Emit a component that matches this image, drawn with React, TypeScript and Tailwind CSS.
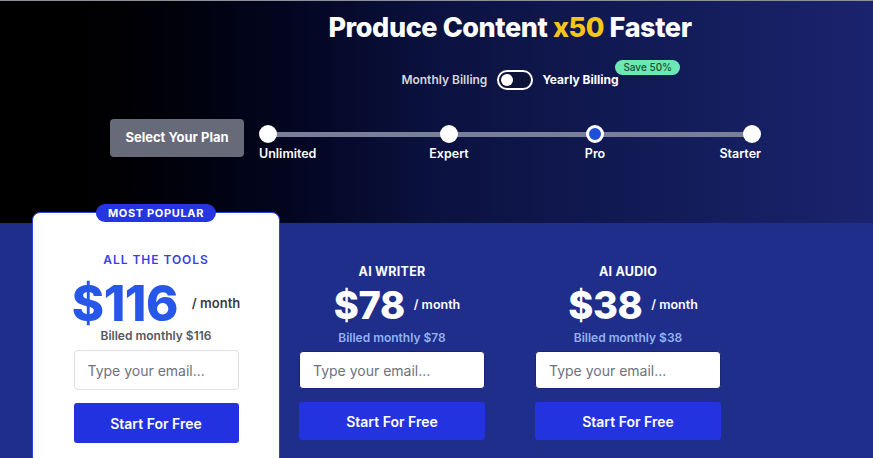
import React from "react";

const font = { fontFamily: "Inter, 'Noto Sans', sans-serif" };

function Slider() {
  const dots = [
    { x: 0, label: "Unlimited", align: "left" },
    { x: 181, label: "Expert", align: "center" },
    { x: 327, label: "Pro", align: "center", active: true },
    { x: 484, label: "Starter", align: "right" },
  ];
  return (
    <div className="relative ml-[15px] h-[44px] w-[502px]">
      <div className="absolute left-[9px] right-[9px] top-[13px] h-[5px] rounded-full bg-[#7a7f99]" />
      {dots.map((d) => (
        <div key={d.label}>
          <div
            className={
              d.active
                ? "absolute top-[6px] h-[18px] w-[18px] rounded-full border-[3px] border-white bg-[#1d4fd8]"
                : "absolute top-[6px] h-[18px] w-[18px] rounded-full bg-white"
            }
            style={{ left: d.x }}
          />
          <div
            className="absolute top-[27px] whitespace-nowrap text-[12.5px] font-semibold leading-[16px] text-white"
            style={
              d.align === "left"
                ? { left: 0 }
                : d.align === "right"
                ? { right: 0 }
                : { left: d.x + 9, transform: "translateX(-50%)" }
            }
          >
            {d.label}
          </div>
        </div>
      ))}
    </div>
  );
}

function SmallCard({ title, price, billed }: { title: string; price: string; billed: string }) {
  return (
    <div className="flex w-[224px] flex-col items-center px-[19px] pt-[41px]">
      <div className="text-[12.5px] font-bold leading-[16px] tracking-[0.02em] text-white">{title}</div>
      <div className="mt-[6px] flex items-center pl-[10px]">
        <span className="text-[38px] font-extrabold leading-[38px] tracking-[-0.01em] text-white">{price}</span>
        <span className="ml-[9px] text-[12.5px] font-semibold text-white">/ month</span>
      </div>
      <div className="mt-[6px] text-[12px] font-semibold leading-[16px] text-[#93b2f2]">{billed}</div>
      <div className="mt-[5px] flex h-[38px] w-[186px] items-center rounded-[4px] border border-[#1a2470] bg-white pl-[13px] text-[14px] text-[#6b7280]">
        Type your email...
      </div>
      <div className="mt-[13px] flex h-[38px] w-[186px] items-center justify-center rounded-[3px] bg-[#2333e0] text-[14px] font-semibold text-white">
        Start For Free
      </div>
    </div>
  );
}

export default function App() {
  return (
    <div className="h-[458px] w-[873px] overflow-hidden" style={font}>
      <div className="h-[223px] bg-gradient-to-r from-[#000000] via-[#0b1240] to-[#1a246e]">
        <div className="h-px bg-[#8d8f99]" />
        <div className="pl-[147px] pt-[10px] text-center text-[27px] font-extrabold leading-[34px] tracking-[-0.015em] text-white">
          Produce Content <span className="text-[#f5c518]">x50</span> Faster
        </div>
        <div className="mt-[25px] flex items-center justify-center pl-[147px]">
          <span className="text-[12px] font-semibold text-[#d4d6df]">Monthly Billing</span>
          <div className="ml-[10px] flex h-[20px] w-[36px] items-center rounded-full border-2 border-white bg-[#0e1438] pl-[2px]">
            <div className="h-[12px] w-[12px] rounded-full bg-white" />
          </div>
          <span className="relative ml-[9px] text-[12px] font-bold text-white">
            Yearly Billing
            <span className="absolute left-[73px] top-[-11px] whitespace-nowrap rounded-full bg-[#6ee7b7] px-[8px] py-[1px] text-[10px] font-medium leading-[13px] text-[#14532d]">
              Save 50%
            </span>
          </span>
        </div>
        <div className="ml-[110px] mt-[29px] flex items-start">
          <div className="flex h-[38px] w-[134px] items-center justify-center rounded-[4px] bg-[#676a79] text-[13px] font-bold text-white">
            Select Your Plan
          </div>
          <Slider />
        </div>
      </div>
      <div className="flex h-[235px] items-start bg-[#1e2e8a]">
        <div className="relative ml-[32px] -mt-[11px] flex h-[260px] w-[248px] flex-col items-center rounded-t-[8px] border border-[#2f3fe0] bg-white pt-[39px]">
          <div className="absolute left-1/2 top-[-9px] -translate-x-1/2 whitespace-nowrap rounded-full bg-[#2536e0] px-[12px] py-[2px] text-[11px] font-bold leading-[14px] tracking-[0.06em] text-white">
            MOST POPULAR
          </div>
          <div className="text-[12px] font-semibold leading-[16px] tracking-[0.08em] text-[#3a3fe6]">ALL THE TOOLS</div>
          <div className="mt-[12px] flex h-[48px] items-center">
            <span className="text-[49px] font-extrabold leading-[48px] tracking-[-0.01em] text-[#2657e8]">$116</span>
            <span className="ml-[14px] text-[13px] font-semibold text-[#3b3b48]">/ month</span>
          </div>
          <div className="text-[12px] font-semibold leading-[16px] text-[#55575f]">Billed monthly $116</div>
          <div className="mt-[6px] flex h-[40px] w-[165px] items-center rounded-[4px] border border-[#dfe1e8] bg-white pl-[13px] text-[14px] text-[#6b7280]">
            Type your email...
          </div>
          <div className="mt-[13px] flex h-[40px] w-[165px] items-center justify-center rounded-[3px] bg-[#2232e0] text-[14px] font-semibold text-white">
            Start For Free
          </div>
        </div>
        <SmallCard title="AI WRITER" price="$78" billed="Billed monthly $78" />
        <div className="w-[12px]" />
        <SmallCard title="AI AUDIO" price="$38" billed="Billed monthly $38" />
      </div>
    </div>
  );
}
